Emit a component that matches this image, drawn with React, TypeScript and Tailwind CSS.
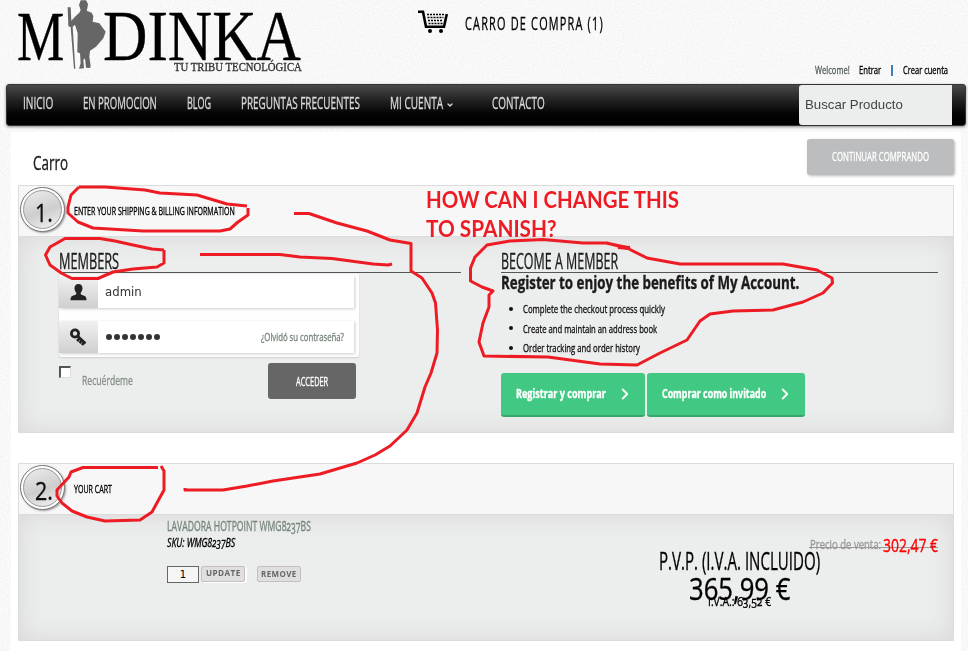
import React, { useLayoutEffect, useRef, useState } from 'react';
import { ChevronDown, ChevronRight } from 'lucide-react';

interface NarrowProps {
  w: number;
  className?: string;
  children: React.ReactNode;
}

// Condensed lettering: squeezes a line of text to the given width
const Narrow: React.FC<NarrowProps> = ({ w, className = '', children }) => {
  const ref = useRef<HTMLSpanElement>(null);
  const [scale, setScale] = useState(1);

  useLayoutEffect(() => {
    if (ref.current) setScale(w / ref.current.offsetWidth);
  }, [w]);

  return (
    <span className={`flex shrink-0 items-center ${className}`} style={{ width: w }}>
      <span
        ref={ref}
        className="inline-block shrink-0 origin-left whitespace-nowrap"
        style={{ transform: `scaleX(${scale})` }}
      >
        {children}
      </span>
    </span>
  );
};

const menu = [
  { title: 'INICIO', w: 30 },
  { title: 'EN PROMOCION', w: 74 },
  { title: 'BLOG', w: 24 },
  { title: 'PREGUNTAS FRECUENTES', w: 119 },
  { title: 'MI CUENTA', w: 53, sub: true },
  { title: 'CONTACTO', w: 53 },
];

const benefits = [
  { text: 'Complete the checkout process quickly', w: 142 },
  { text: 'Create and maintain an address book', w: 134 },
  { text: 'Order tracking and order history', w: 117 },
];

const marks = [
  '79,187 105,187 145,190 160,193 197,195 227,204 247,206',
  '248,208 248,215 238,222 230,229 220,231 143,231 93,228 78,222 68,213 68,207 71,195 79,187',
  '164,250 152,249 133,245 115,241 100,238.5 65,238.5 50,247 45.5,255 50,265 62,273.5 72,278.5 98,278.5 113,272 133,269 157,267 164,263 164,250',
  '200,254.5 280,254.5 300,257 332,258.5 373,264 388,265 392,264',
  '294,213.5 309,213.5 337,223 367,231 390,240 411,243.5 411,271 422,278 432,293 435.5,303 437.5,330 437,353 431,373 425,387 417,413 407,430 390,446 375,455 357,463 320,474 273,481 247,486 223,490 185,490 185,488',
  '158,467.5 83,467.5 71,472 69,477 57,490 57,496 62,503 72,511 87,517 105,521 140,520 152,512 164,490 164,471 161,466',
  '630,249 607,243 583,243 543,239.5 510,241 487,245 475,257 470.5,268 470.5,281 482,287 493,291 489,295 489,307 483,323 479,342 484,356 548,357 600,364 637,365 660,353 687,340 700,321 710,314 733,311 773,310 803,302 823,293 832.5,283 832,278 817,270 783,264 727,264 680,264 647,258 625,247 606,243',
];

const Header = () => (
  <header className="flex h-[84px]">
    <div className="flex w-[304px] pl-[17px] font-['Liberation_Serif',serif] text-black">
      <Narrow w={47} className="h-[74px] text-[69px] leading-none">M</Narrow>
      <svg className="ml-[3px] h-[70px] w-[39px] shrink-0" viewBox="21 0 117 210" fill="#666">
        <path d="M62 1L78 1L84 12L82 25L80 32L95 38L100 48L98 65L118 70L137 95L130 115L108 140L90 152L88 170L92 198L90 204L78 203L75 175L70 180L72 205L57 206L62 190L60 160L52 157L53 100L45 74L38 80L46 206L42 206L32 82L25 78L23 22L32 22L34 62L45 50L58 38L62 30L57 15Z" />
      </svg>
      <div className="mt-3 -ml-[3px] flex flex-col">
        <Narrow w={198} className="h-12 text-[72px] leading-none">DINKA</Narrow>
        <Narrow w={128} className="ml-[71px] h-[14px] text-[12.5px] leading-none text-[#333]">TU TRIBU TECNOLÓGICA</Narrow>
      </div>
    </div>
    <div className="ml-[114px] flex h-[46px] items-center">
      <svg className="-mt-0.5 h-6 w-[30px]" viewBox="0 0 30 24" fill="none" stroke="#000">
        <path d="M0 1.7h5l3 15h18L28.800 4" strokeWidth="2.600" />
        <path d="M9 4.500h17M9.500 7.500h16M10 10.500h15M10.500 13.500h14" strokeWidth="1.700" strokeDasharray="2 1" />
        <circle cx="12" cy="21" r="2" fill="#000" stroke="none" />
        <circle cx="23" cy="21" r="2" fill="#000" stroke="none" />
      </svg>
      <Narrow w={139} className="ml-[17px] text-[18px] tracking-[2px] text-black">CARRO DE COMPRA (1)</Narrow>
    </div>
    <div className="mr-5 ml-auto flex h-[28px] items-center self-end text-[11.5px] text-black">
      <Narrow w={35} className="text-[#555f58]">Welcome!</Narrow>
      <Narrow w={22} className="ml-[9px]">Entrar</Narrow>
      <span className="ml-[10px] h-[11px] w-[2px] bg-[#3f7fb5]" />
      <Narrow w={45} className="ml-[10px]">Crear cuenta</Narrow>
    </div>
  </header>
);

const Nav = () => (
  <nav className="mr-[2px] ml-1.5 flex h-[42px] rounded-[3px] border border-[#333] bg-gradient-to-b from-[#4a4a4a] to-black shadow-[0_1px_3px_#888]">
    <ul className="flex h-9 items-center gap-[30px] pl-4 text-[16.5px] text-[#d8d8d8]">
      {menu.map((item) => (
        <li key={item.title} className="flex items-center">
          <Narrow w={item.w}>{item.title}</Narrow>
          {item.sub && <ChevronDown className="mt-1 mr-[8px] ml-[3px] h-2 w-2" strokeWidth={4} />}
        </li>
      ))}
    </ul>
    <div className="mr-[13px] ml-auto flex h-10 w-[153px] items-center rounded-l-[3px] bg-[#eceeed] pt-px pl-1.5 font-['Liberation_Sans',sans-serif] text-[13.5px] text-[#444] [-webkit-text-stroke:0]">
      <Narrow w={98}>Buscar Producto</Narrow>
    </div>
  </nav>
);

interface SectionProps {
  num: string;
  title: string;
  titleWidth: number;
  className: string;
  children: React.ReactNode;
}

const Section: React.FC<SectionProps> = ({ num, title, titleWidth, className, children }) => (
  <section className="w-[936px] border border-[#dcdcdc]">
    <div className="flex h-[50px] items-center bg-[#f7f7f7] pl-px">
      <div className="mb-[3px] flex h-[45px] w-[45px] items-center rounded-full border-[1.5px] border-[#777] bg-white p-[2px] shadow-[1px_1px_2px_#999]">
        <div className="flex h-full w-full items-center rounded-full border border-[#999] bg-linear-[160deg,#ececec,#cecece_55%,#f3f3f3] pt-1.5 pl-[11px]">
          <Narrow w={18} className="text-[25px] leading-none text-[#111]">{num}</Narrow>
        </div>
      </div>
      <Narrow w={titleWidth} className="ml-[9px] text-[11.5px] text-black">{title}</Narrow>
    </div>
    <div className={`border-t border-[#dcdcdc] bg-[#eceeed] shadow-[inset_0_0_26px_#d6d6d6] ${className}`}>
      {children}
    </div>
  </section>
);

const Login = () => (
  <div className="w-[402px]">
    <h3 className="flex h-9 items-center border-b border-[#555] pt-[13px] text-[21px] leading-none text-[#1b1b1b]">
      <Narrow w={60}>MEMBERS</Narrow>
    </h3>
    <div className="mt-px w-[300px] rounded-[3px] bg-white pt-0.5 pb-1 shadow-[0_1px_2px_#ccc]">
      <div className="flex h-8 w-[295px] items-center shadow-[1px_1px_3px_#ccc]">
        <div className="flex h-full w-[39px] items-center justify-center bg-gradient-to-b from-[#f1f1f1] to-[#cfcfcf]">
          <svg className="h-[17px] w-[17px]" viewBox="0 0 17 17" fill="#222">
            <path d="M8.5 0c2.6 0 4 1.8 4 4.300 0 1.900-.8 3.400-1.900 4.600 0 1.400.8 1.800 2.400 2.300 2.600.8 3.500 1.800 3.500 5H.5c0-3.200.9-4.200 3.500-5 1.600-.5 2.400-.9 2.400-2.300-1.100-1.200-1.900-2.700-1.900-4.600C4.500 1.800 5.900 0 8.500 0z" />
          </svg>
        </div>
        <Narrow w={37} className="ml-[7px] font-['DejaVu_Sans',sans-serif] text-[13px] text-[#333] [-webkit-text-stroke:0]">admin</Narrow>
      </div>
      <div className="mt-[13px] flex h-8 w-[295px] items-center shadow-[1px_1px_3px_#ccc]">
        <div className="flex h-full w-[39px] items-center justify-center bg-gradient-to-b from-[#f1f1f1] to-[#cfcfcf]">
          <svg className="h-[18px] w-[17px]" viewBox="0 0 17 18" fill="none" stroke="#222">
            <circle cx="5" cy="5.500" r="3.600" strokeWidth="2.800" />
            <path d="M7.500 8l8 7.500M9.500 10.500L7 13M12 12.500l-2.500 2.500M14 14.500L12 17" strokeWidth="2.600" />
          </svg>
        </div>
        <div className="ml-2 flex gap-[2px]">
          {[0, 1, 2, 3, 4, 5, 6].map((dot) => (
            <span key={dot} className="h-1.5 w-1.5 rounded-full bg-[#333]" />
          ))}
        </div>
        <Narrow w={83} className="mr-[10px] ml-auto text-[11.5px] text-[#75857a]">¿Olvidó su contraseña?</Narrow>
      </div>
    </div>
    <div className="mt-[6px] flex w-[297px]">
      <span className="mt-[3px] h-3 w-3 border-t-2 border-r border-b border-l-2 border-t-[#555] border-r-[#ddd] border-b-[#ddd] border-l-[#555] bg-white" />
      <Narrow w={51} className="ml-[11px] h-[34px] text-[13.5px] text-[#878f89]">Recuérdeme</Narrow>
      <button className="ml-auto flex h-9 w-[88px] items-center justify-center rounded-[3px] bg-[#666] pt-[3px] text-[12.5px] text-white">
        <Narrow w={32}>ACCEDER</Narrow>
      </button>
    </div>
  </div>
);

const Register = () => (
  <div className="ml-10 w-[437px]">
    <h3 className="flex h-9 items-center border-b border-[#555] pt-[13px] text-[21px] leading-none text-[#1b1b1b]">
      <Narrow w={117}>BECOME A MEMBER</Narrow>
    </h3>
    <Narrow w={298} className="h-[19px] text-[17px] font-bold text-[#1b1b1b]">
      Register to enjoy the benefits of My Account.
    </Narrow>
    <ul className="mt-[7px] text-[11.5px] text-[#111]">
      {benefits.map((b) => (
        <li key={b.text} className="flex h-[19.500px] items-center">
          <span className="ml-2 h-1 w-1 rounded-full bg-[#111]" />
          <Narrow w={b.w} className="ml-[10px]">{b.text}</Narrow>
        </li>
      ))}
    </ul>
    <div className="mt-[15px] flex gap-[2px] text-[12px] font-bold text-white">
      <button className="flex h-11 w-36 items-center rounded-[3px] border-b-2 border-[#36a66d] bg-[#41c983] pl-[15px]">
        <Narrow w={90}>Registrar y comprar</Narrow>
        <ChevronRight className="ml-[10px] h-[18px] w-[18px]" strokeWidth={2.5} />
      </button>
      <button className="flex h-11 w-[158px] items-center rounded-[3px] border-b-2 border-[#36a66d] bg-[#41c983] pl-[15px]">
        <Narrow w={104}>Comprar como invitado</Narrow>
        <ChevronRight className="ml-[10px] h-[18px] w-[18px]" strokeWidth={2.5} />
      </button>
    </div>
  </div>
);

const CartRow = () => (
  <>
    <div className="pt-px">
      <Narrow w={144} className="h-[19px] text-[14.5px] text-[#75857a] oldstyle-nums">LAVADORA HOTPOINT WMG8237BS</Narrow>
      <Narrow w={68} className="h-4 text-[12px] text-black italic oldstyle-nums">SKU: WMG8237BS</Narrow>
      <div className="mt-[14px] flex h-[18px] items-center [-webkit-text-stroke:0]">
        <span className="flex h-[17px] w-8 items-center justify-center border border-[#666] bg-[#f5f5f5] font-['DejaVu_Sans',sans-serif] text-[10px]">1</span>
        <button className="mb-px ml-[2px] flex h-4 w-11 items-center justify-center rounded-[2px] border border-[#c5bfbf] bg-[#e0dfdf] text-[9.5px] font-bold text-[#666] shadow-[2px_1px_0_#fff]">
          <Narrow w={35} className="tracking-[0.5px]">UPDATE</Narrow>
        </button>
        <button className="ml-3 flex h-4 w-11 items-center justify-center rounded-[2px] border border-[#c5bfbf] bg-[#e0dfdf] text-[9.5px] font-bold text-[#666]">
          <Narrow w={36} className="tracking-[0.5px]">REMOVE</Narrow>
        </button>
      </div>
    </div>
    <div className="ml-auto w-[162px] pt-[32px] text-black">
      <Narrow w={161} className="ml-px h-[28px] text-[25px]">P.V.P. (I.V.A. INCLUIDO)</Narrow>
      <Narrow w={101} className="ml-[31px] h-[26px] text-[31px]">365,99 €</Narrow>
      <Narrow w={63} className="ml-[50px] h-[2px] text-[13px] oldstyle-nums">I.V.A.: 63,52 €</Narrow>
    </div>
    <div className="mt-[20px] mr-[15px] -ml-[11px] flex h-5 w-[129px] items-center self-start bg-[linear-gradient(#999,#999)] bg-[length:100%_1px] bg-[position:0_12px] bg-no-repeat">
      <Narrow w={71} className="ml-px text-[12.5px] text-[#999]">Precio de venta:</Narrow>
      <Narrow w={55} className="ml-[2px] text-[17.5px] text-[#f00]">302,47 €</Narrow>
    </div>
  </>
);

export default function App() {
  return (
    <div className="relative isolate h-[651px] w-[968px] overflow-hidden bg-[#fbfbfb] font-['Open_Sans',sans-serif] [-webkit-text-stroke:0.35px]">
      <svg className="absolute inset-0 -z-10 h-full w-full opacity-35">
        <filter id="grain">
          <feTurbulence type="fractalNoise" baseFrequency="0.6" numOctaves="2" />
          <feColorMatrix values="0 0 0 0 0.75  0 0 0 0 0.75  0 0 0 0 0.75  2 0 0 0 -0.7" />
        </filter>
        <rect width="968" height="651" filter="url(#grain)" />
      </svg>

      <Header />
      <Nav />

      <main className="mt-1.5 ml-[11px] h-[519px] w-[950px] bg-white pl-[7px]">
        <div className="flex h-[53px] pt-[7px]">
          <Narrow w={35} className="ml-[15px] h-[47px] text-[20px] text-[#1b1b1b]">Carro</Narrow>
          <button className="mr-[7px] ml-auto flex h-9 w-[147px] items-center justify-center rounded-[3px] bg-[#bbbdbe] pt-px text-[12.5px] text-white shadow-[1px_1px_3px_#bbb]">
            <Narrow w={97}>CONTINUAR COMPRANDO</Narrow>
          </button>
        </div>

        <Section num="1." title="ENTER YOUR SHIPPING & BILLING INFORMATION" titleWidth={161} className="flex h-[196px] pl-10">
          <Login />
          <Register />
        </Section>
        <div className="h-[30px]" />
        <Section num="2." title="YOUR CART" titleWidth={38} className="flex h-[126px] pl-[148px]">
          <CartRow />
        </Section>
      </main>

      <div className="absolute top-[185px] left-[426px] font-[Lato,sans-serif] text-[23px] leading-[29px] font-bold text-[#ed1c24] [-webkit-text-stroke:0]">
        <Narrow w={253} className="h-[29px]">HOW CAN I CHANGE THIS</Narrow>
        <Narrow w={131} className="h-[29px]">TO SPANISH?</Narrow>
      </div>
      <svg className="absolute inset-0" width="968" height="651" fill="none" stroke="#ed1c24" strokeWidth="3" strokeLinejoin="round">
        {marks.map((points) => (
          <polyline key={points} points={points} />
        ))}
        <path d="M618 247l12 1" strokeWidth="4" />
      </svg>
    </div>
  );
}
